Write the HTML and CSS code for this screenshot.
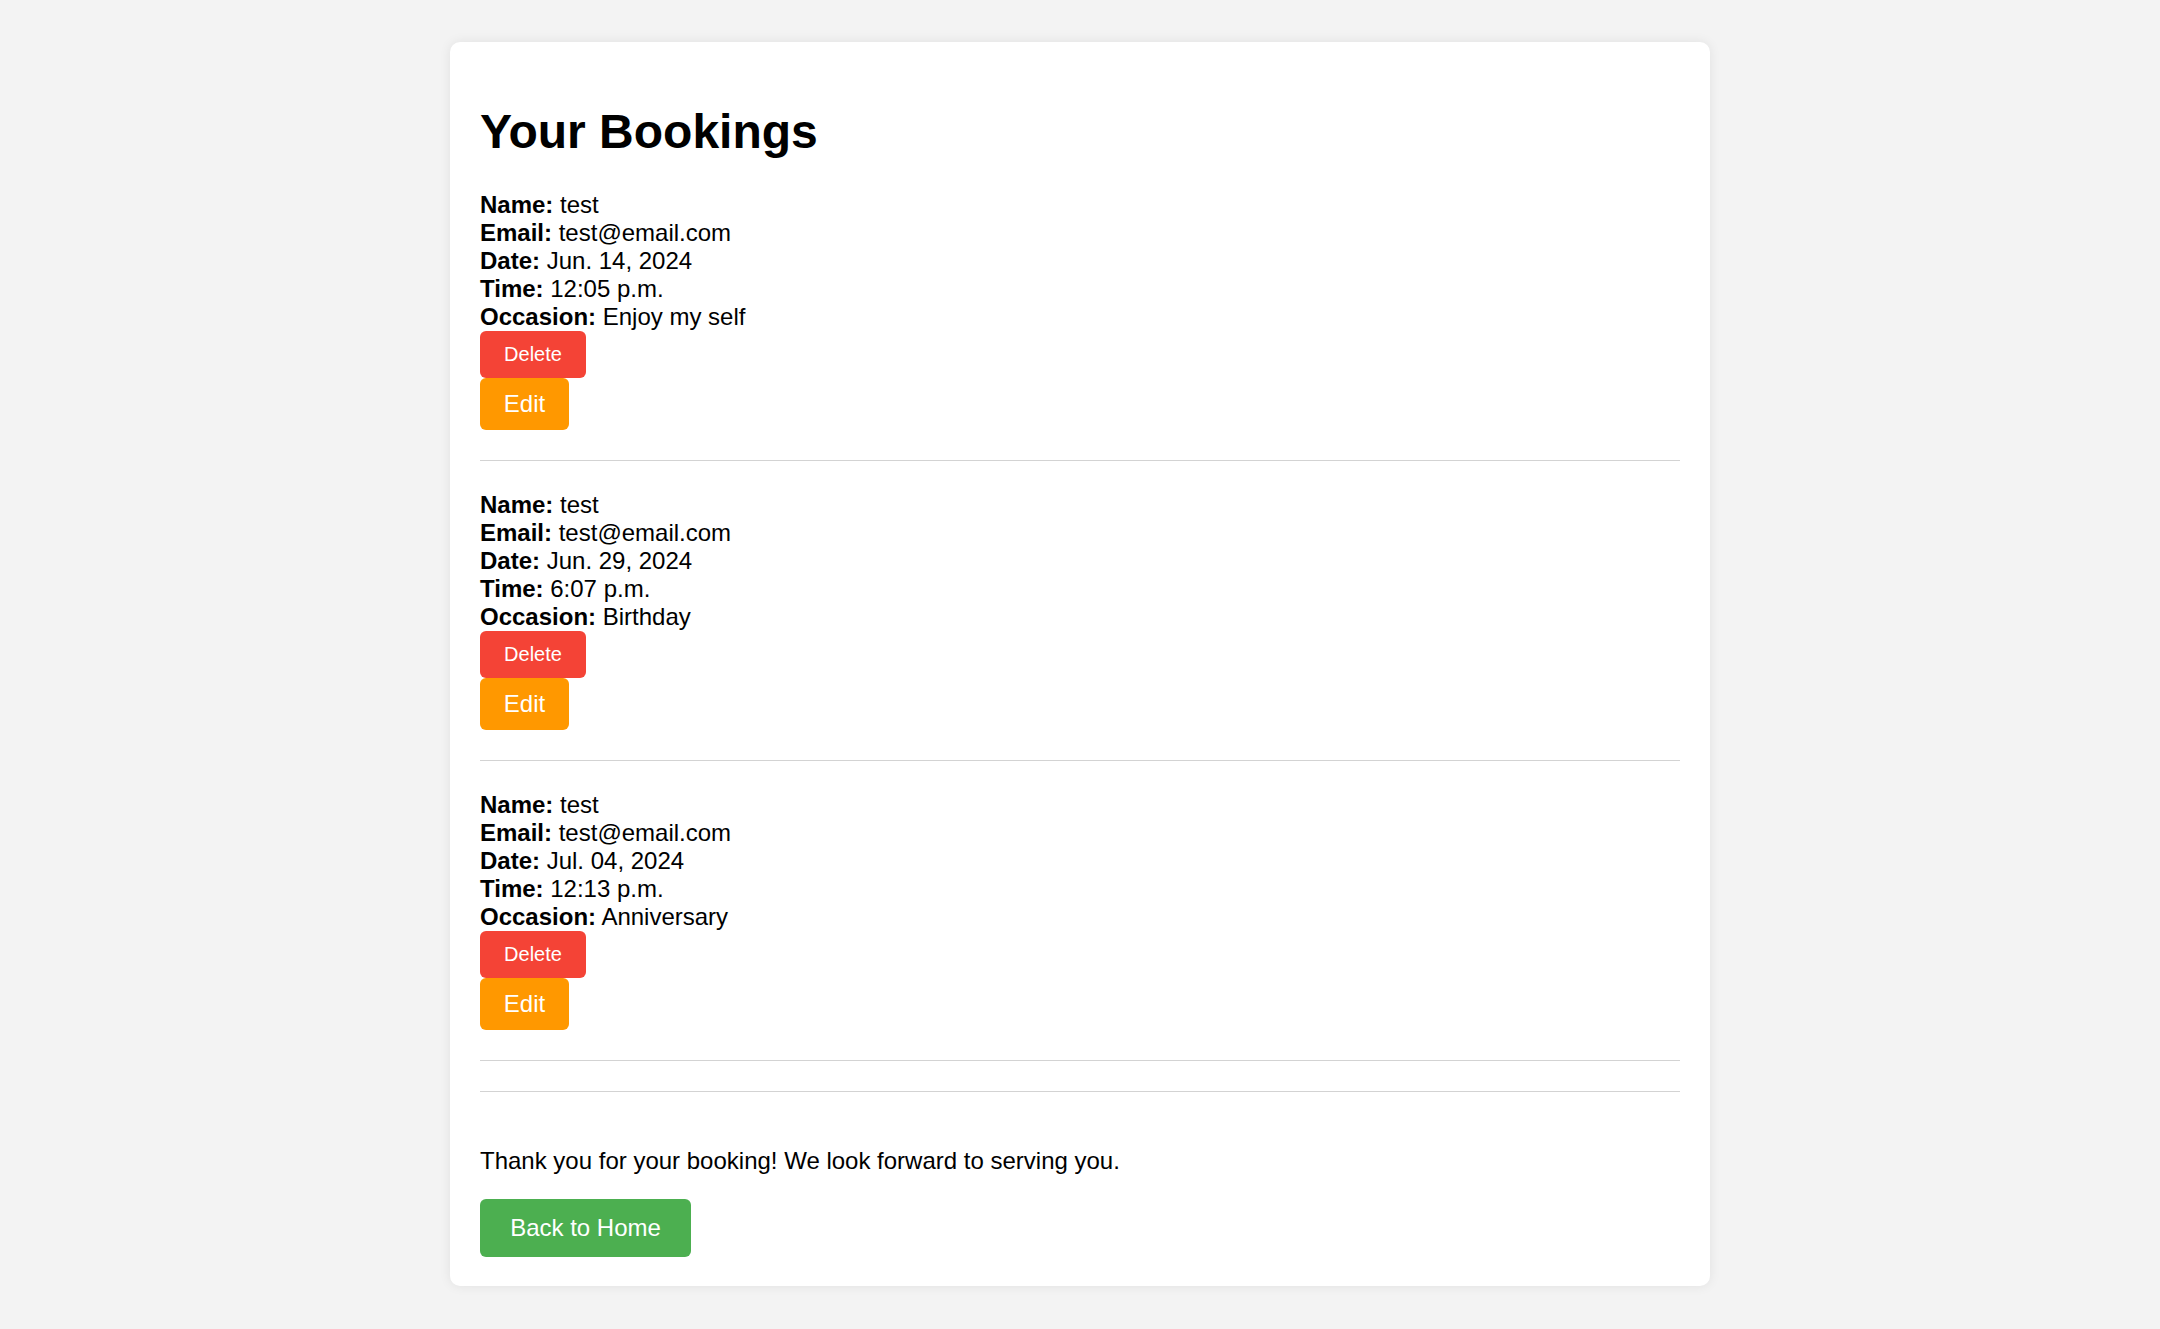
FILE: index.html
```html
<!DOCTYPE html>
<html lang="en">
<head>
<meta charset="utf-8">
<title>Your Bookings</title>
<link rel="stylesheet" href="styles.css">
</head>
<body>
<main class="card">
  <h1 class="title">Your Bookings</h1>
  <section class="booking">
    <div class="info">
      <div><strong>Name:</strong> test</div>
      <div><strong>Email:</strong> test@email.com</div>
      <div><strong>Date:</strong> Jun. 14, 2024</div>
      <div><strong>Time:</strong> 12:05 p.m.</div>
      <div><strong>Occasion:</strong> Enjoy my self</div>
    </div>
    <div class="actions">
      <button class="btn btn-delete">Delete</button>
      <button class="btn btn-edit">Edit</button>
    </div>
  </section>
  <section class="booking">
    <div class="info">
      <div><strong>Name:</strong> test</div>
      <div><strong>Email:</strong> test@email.com</div>
      <div><strong>Date:</strong> Jun. 29, 2024</div>
      <div><strong>Time:</strong> 6:07 p.m.</div>
      <div><strong>Occasion:</strong> Birthday</div>
    </div>
    <div class="actions">
      <button class="btn btn-delete">Delete</button>
      <button class="btn btn-edit">Edit</button>
    </div>
  </section>
  <section class="booking">
    <div class="info">
      <div><strong>Name:</strong> test</div>
      <div><strong>Email:</strong> test@email.com</div>
      <div><strong>Date:</strong> Jul. 04, 2024</div>
      <div><strong>Time:</strong> 12:13 p.m.</div>
      <div><strong>Occasion:</strong> Anniversary</div>
    </div>
    <div class="actions">
      <button class="btn btn-delete">Delete</button>
      <button class="btn btn-edit">Edit</button>
    </div>
  </section>
  <hr class="divider">
  <p class="thanks">Thank you for your booking! We look forward to serving you.</p>
  <button class="btn btn-home">Back to Home</button>
</main>
</body>
</html>
```
FILE: styles.css
```css
html, body {
  margin: 0;
  padding: 0;
}
body {
  background: #f3f3f3;
  font-family: "Liberation Sans", Arial, sans-serif;
  font-size: 24px;
  color: #000;
  padding: 42px 0 44px;
}
.card {
  width: 1200px;
  margin: 0 auto;
  padding: 30px 30px 29px;
  background: #fff;
  border-radius: 10px;
  box-shadow: 0 0 12px rgba(0, 0, 0, 0.08);
  display: flex;
  flex-direction: column;
  align-items: flex-start;
}
.title {
  font-size: 48px;
  font-weight: bold;
  margin: 32px 0 32px;
  line-height: normal;
}
.booking {
  align-self: stretch;
  border-bottom: 1px solid #d3d3d3;
  padding-bottom: 30px;
  margin-bottom: 30px;
}
.info {
  line-height: normal;
}
.info strong {
  font-weight: bold;
}
.actions {
  display: flex;
  flex-direction: column;
  align-items: flex-start;
}
.btn {
  font-family: "Liberation Sans", Arial, sans-serif;
  color: #fff;
  border: none;
  border-radius: 6px;
  line-height: normal;
  text-align: center;
  cursor: pointer;
}
.btn-delete {
  background: #f44336;
  font-size: 20px;
  padding: 12px 0;
  width: 106px;
}
.btn-edit {
  background: #ff9800;
  font-size: 24px;
  padding: 12px 0;
  width: 89px;
}
.btn-home {
  background: #4caf50;
  font-size: 24px;
  padding: 15px 0;
  width: 211px;
}
.divider {
  align-self: stretch;
  border: none;
  border-top: 1px solid #d3d3d3;
  margin: 0 0 55px;
  height: 0;
}
.thanks {
  margin: 0 0 24px;
  line-height: normal;
}
```
